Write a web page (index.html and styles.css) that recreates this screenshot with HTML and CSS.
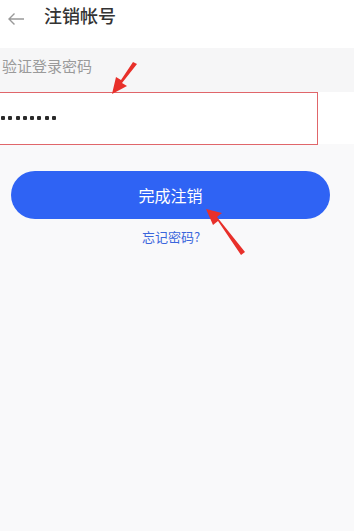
FILE: index.html
```html
<!DOCTYPE html>
<html lang="zh-CN">
<head>
  <meta charset="UTF-8">
  <meta name="viewport" content="width=device-width, initial-scale=1.0">
  <title>注销帐号</title>
  <link rel="stylesheet" href="styles.css">
</head>
<body>
  <div class="navbar">
    <svg class="back" width="18" height="14" viewBox="0 0 18 14">
      <path d="M17 7H2M7.5 1.5L2 7l5.5 5.5" fill="none" stroke="#999" stroke-width="1.4"/>
    </svg>
    <h1>注销帐号</h1>
  </div>

  <div class="page">
    <p class="field-label">验证登录密码</p>
    <div class="field">
      <div class="dots">
        <i></i><i></i><i></i><i></i><i></i><i></i><i></i><i></i>
      </div>
    </div>

    <button class="submit">完成注销</button>
    <a class="forgot" href="#">忘记密码?</a>
  </div>

  <!-- annotation overlay -->
  <div class="mark-box"></div>
  <svg class="overlay" width="354" height="531" viewBox="0 0 354 531">
    <polygon points="137,64 133,62 121,80 116,77 112,94 127,86 122,83" fill="#e8302a"/>
    <polygon points="245,252 241,255 218,221 213,225 206,209 222,213 217,217" fill="#e8302a"/>
  </svg>
</body>
</html>
```

FILE: styles.css
```css
body {
  margin: 0;
  font-family: "Noto Sans CJK SC", "Noto Sans", sans-serif;
  background: #f9f9fa;
  position: relative;
  height: 531px;
  overflow: hidden;
}

.navbar {
  background: #ffffff;
  height: 48px;
  display: flex;
  align-items: flex-start;
  padding-top: 4px;
  box-sizing: border-box;
}

.navbar .back {
  margin: 8px 0 0 7px;
}

.navbar h1 {
  margin: 0 0 0 19px;
  font-size: 18px;
  font-weight: 500;
  line-height: 22px;
  color: #333;
}

.field-label {
  margin: 0;
  padding: 7px 0 0 2px;
  height: 37px;
  background: #f6f6f7;
  font-size: 15px;
  line-height: 22px;
  color: #9a9a9a;
}

.field {
  background: #ffffff;
  height: 52px;
  display: flex;
  align-items: center;
}

.dots {
  display: flex;
  gap: 3.3px;
  margin-left: 1px;
}

.dots i {
  width: 4px;
  height: 4px;
  border-radius: 1px;
  background: #2a2a2a;
}

.submit {
  display: block;
  margin: 27px 0 0 11px;
  width: 319px;
  height: 48px;
  border: none;
  border-radius: 24px;
  background: #2f63f4;
  color: #fff;
  font-family: inherit;
  font-size: 16px;
}

.forgot {
  display: block;
  width: 64px;
  margin: 10px 0 0 142px;
  font-size: 13px;
  color: #3a66dc;
  text-decoration: none;
  line-height: 16px;
}

.mark-box {
  position: absolute;
  left: -2px;
  top: 92px;
  width: 318px;
  height: 51px;
  border: 1px solid #e0666a;
}

.overlay {
  position: absolute;
  left: 0;
  top: 0;
}
```
